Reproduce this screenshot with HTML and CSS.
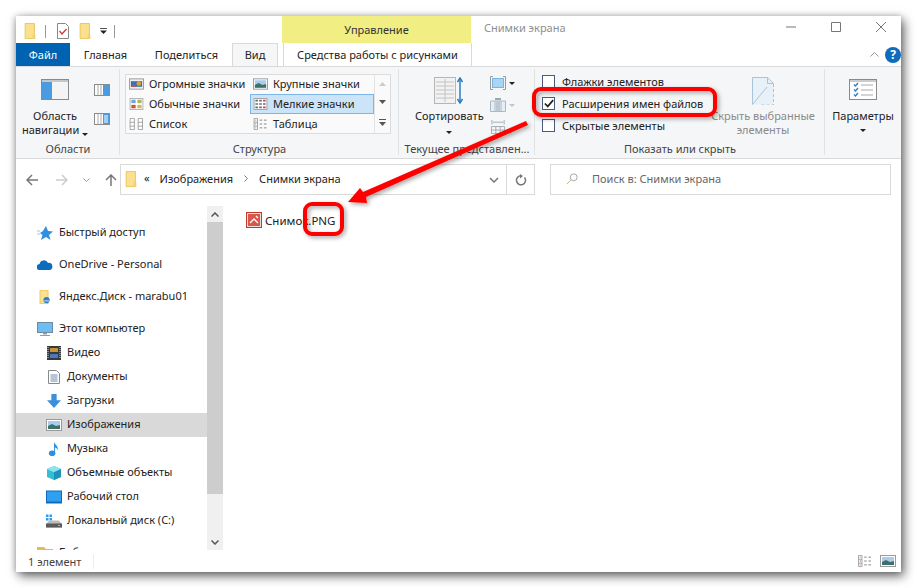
FILE: index.html
```html
<!DOCTYPE html>
<html lang="ru">
<head>
	<meta charset="UTF-8" />
	<title>Снимки экрана</title>
	<link rel="stylesheet" href="styles.css">
</head>
<body>
	<svg class="defs" width="0" height="0">
		<symbol id="folder" viewBox="0 0 12 18">
			<path d="M.5.5h10.500v17H.5z" fill="#fbe08e" stroke="#e8c35a"/>
			<path d="M9 13h3v5H9z" fill="#f3cf6e"/>
		</symbol>
		<symbol id="picture" viewBox="0 0 16 12">
			<rect x=".5" y=".5" width="15" height="11" fill="#fff" stroke="#9a9a9a"/>
			<rect x="2" y="2" width="12" height="8" fill="#a9cdea"/>
			<path d="M2 7l4-2 4 2 4-1v4H2z" fill="#3f6f6a"/>
		</symbol>
		<symbol id="dots" viewBox="0 0 16 14">
			<path d="M.5.5h4v13h-4zM.5 5h4M.5 9.500h4" fill="#fff" stroke="#999"/>
			<path d="M7 2.500h3M12 2.500h3M7 7h3M12 7h3M7 11.500h3M12 11.500h3" stroke="#777"/>
			<path d="M2 2h1v1H2zM2 6.500h1v1H2z" fill="#555"/>
			<path d="M2 11h1v1H2z" fill="#c33"/>
		</symbol>
	</svg>

	<div class="window">
		<div class="titlebar">
			<div class="quick">
				<svg class="i-folder"><use href="#folder"/></svg>
				<span class="qsep"></span>
				<svg class="i-check" viewBox="0 0 12 16"><path d="M.5.5h8l3 3v12H.5z" fill="#fff" stroke="#888"/><path d="M2.500 8l2.500 3 4.500-5" fill="none" stroke="#d33" stroke-width="1.300"/></svg>
				<svg class="i-folder"><use href="#folder"/></svg>
				<svg class="i-more" viewBox="0 0 8 7"><path d="M0 .5h8" stroke="#222"/><path d="M0 3h8L4 7z" fill="#222"/></svg>
				<span class="qsep"></span>
			</div>
			<div class="manage">Управление</div>
			<div class="title">Снимки экрана</div>
			<div class="controls">
				<svg viewBox="0 0 10 10"><path d="M0 5h10" stroke="#777"/></svg>
				<svg viewBox="0 0 10 10"><path d="M.5.500h9v9h-9z" fill="none" stroke="#777"/></svg>
				<svg viewBox="0 0 10 10"><path d="M0 0l10 10M10 0L0 10" stroke="#777"/></svg>
			</div>
		</div>

		<div class="tabs">
			<div class="tab tab-file">Файл</div>
			<div class="tab tab-home">Главная</div>
			<div class="tab tab-share">Поделиться</div>
			<div class="tab tab-view">Вид</div>
			<div class="tab tab-tools">Средства работы с рисунками</div>
			<div class="tabs-right">
				<svg class="i-up" viewBox="0 0 9 5"><path d="M.5 4.500l4-4 4 4" fill="none" stroke="#999"/></svg>
				<span class="help">?</span>
			</div>
		</div>

		<div class="ribbon">
			<div class="group g-panes">
				<div class="group-body panes">
					<div class="big">
						<svg class="i-nav" viewBox="0 0 28 21"><rect x=".5" y=".5" width="27" height="20" fill="#f4f4f4" stroke="#8a8a8a"/><rect x="1" y="3" width="10" height="17" fill="#4a9be0"/><path d="M1 2h26" stroke="#999"/></svg>
						<span>Область<br>навигации <i class="caret"></i></span>
					</div>
					<div class="panes-side">
						<svg viewBox="0 0 16 12"><rect x=".5" y=".5" width="15" height="11" fill="#fff" stroke="#8a8a8a"/><rect x="9" y="1" width="6" height="10" fill="#4a9be0"/><path d="M4 1v10M7 1v10" stroke="#aaa"/></svg>
						<svg viewBox="0 0 16 12"><rect x=".5" y=".5" width="15" height="11" fill="#fff" stroke="#8a8a8a"/><rect x="9" y="1" width="6" height="10" fill="#4a9be0"/><path d="M10 3h4M10 5h4M10 7h4M10 9h4" stroke="#fff"/><path d="M4 1v10M7 1v10" stroke="#aaa"/></svg>
					</div>
				</div>
				<div class="group-label">Области</div>
			</div>

			<div class="group g-layout">
				<div class="group-body">
					<div class="gallery">
						<div class="gallery-items">
							<div class="gitem"><svg viewBox="0 0 16 12"><rect x=".5" y=".5" width="15" height="11" fill="#eee" stroke="#999"/><rect x="2" y="3" width="12" height="6" fill="#3a6fb0"/><path d="M2 9l3-3 3 3z" fill="#c8503a"/><circle cx="10.500" cy="5.500" r="2.500" fill="#e0a030"/></svg>Огромные значки</div>
							<div class="gitem"><svg><use href="#picture"/></svg>Крупные значки</div>
							<div class="gitem"><svg viewBox="0 0 16 14"><rect x=".5" y=".5" width="15" height="13" fill="#fff" stroke="#aaa"/><path d="M2 2h5v4H2z" fill="#6fa8d8"/><path d="M9 2h5v4H9z" fill="#a8b860"/><path d="M2 8h5v4H2z" fill="#d0503a"/><path d="M9 8h5v4H9z" fill="#d8b850"/></svg>Обычные значки</div>
							<div class="gitem gitem-on"><svg viewBox="0 0 16 14"><rect x=".5" y=".5" width="15" height="13" fill="#fff" stroke="#999"/><path d="M2 2h3v2H2zM6.500 2h3v2h-3zM2 6h3v2H2zM6.500 6h3v2h-3zM11 6h3v2h-3zM2 10h3v2H2zM6.500 10h3v2h-3z" fill="#6a6a6a"/><path d="M11 2h3v2h-3zM11 10h3v2h-3z" fill="#b44"/></svg>Мелкие значки</div>
							<div class="gitem"><svg viewBox="0 0 16 14"><path d="M.5.5h5v13h-5zM.5 5h5M.5 9.500h5M10 .5h5v13h-5zM10 5h5M10 9.500h5" fill="#fff" stroke="#999"/></svg>Список</div>
							<div class="gitem"><svg><use href="#dots"/></svg>Таблица</div>
						</div>
						<div class="gallery-scroll">
							<svg viewBox="0 0 7 4"><path d="M0 4l3.500-4L7 4z" fill="#ccc"/></svg>
							<svg viewBox="0 0 7 4"><path d="M0 0l3.500 4L7 0z" fill="#555"/></svg>
							<svg class="down-more" viewBox="0 0 7 7"><path d="M0 .5h7" stroke="#555"/><path d="M0 3l3.500 4L7 3z" fill="#555"/></svg>
						</div>
					</div>
				</div>
				<div class="group-label">Структура</div>
			</div>

			<div class="group g-current">
				<div class="group-body current">
					<div class="big big-sort">
						<svg class="i-sort" viewBox="0 0 30 27"><rect x=".5" y=".5" width="21" height="26" fill="#f2f2f2" stroke="#b5b5b5"/><path d="M2 5h18M2 9h18M2 13h18M2 17h18M2 21h18M11 2v23" stroke="#c2c2c2"/><path d="M26 2v23" stroke="#2c7cc4" stroke-width="1.500"/><path d="M23.500 5L26 1l2.500 4M23.500 22l2.500 4 2.500-4" fill="none" stroke="#2c7cc4" stroke-width="1.500"/></svg>
						<span>Сортировать</span>
						<i class="caret"></i>
					</div>
					<div class="current-side">
						<div class="side-row"><svg viewBox="0 0 16 14"><path d="M3 .5H.5v13H3M13 .5h2.500v13H13" fill="none" stroke="#999"/><rect x="2.500" y="2.500" width="11" height="9" fill="#a9d5f5" stroke="#7ab5e2"/></svg><i class="caret"></i></div>
						<div class="side-row side-off"><svg viewBox="0 0 16 14"><path d="M.5 3h15v10.500H.5z" fill="#e6eef5" stroke="#aab8c4"/><path d="M5 3v11M11 3v11" stroke="#aab8c4"/><path d="M6 3h4v10H6z" fill="#bcc8d2"/><path d="M5 0h6v2H5z" fill="#9aa"/></svg><i class="caret caret-off"></i></div>
						<div class="side-row side-off"><svg viewBox="0 0 16 16"><path d="M1 0v5M15 0v5M2 2.500h12" fill="none" stroke="#9aa4ad"/><path d="M.5 7.500h15v8H.5zM.5 11.500h15M5.500 7.500v8M10.500 7.500v8" fill="none" stroke="#9aa4ad"/></svg></div>
					</div>
				</div>
				<div class="group-label">Текущее представлен...</div>
			</div>

			<div class="group g-show">
				<div class="group-body show">
					<div class="checks">
						<label class="check"><span class="box"></span>Флажки элементов</label>
						<label class="check"><span class="box"><svg viewBox="0 0 12 10"><path d="M1 5l3.500 3.500L11 1" fill="none" stroke="#222" stroke-width="2"/></svg></span>Расширения имен файлов</label>
						<label class="check"><span class="box"></span>Скрытые элементы</label>
					</div>
					<div class="big big-hide">
						<svg class="i-hide" viewBox="0 0 22 28"><path d="M.5.5h15l6 6v21H.5z" fill="#e8f0f8"/><path d="M21.500 7v21H8" fill="none" stroke="#a9c3dc" stroke-dasharray="3 2"/><path d="M.5 27.500V.5h15l6 6h-6V.5M.5 27.500L15 10" fill="none" stroke="#a9c3dc"/></svg>
						<span>Скрыть выбранные<br>элементы</span>
					</div>
				</div>
				<div class="group-label">Показать или скрыть</div>
			</div>

			<div class="group g-options">
				<div class="group-body">
					<div class="big">
						<svg class="i-nav" viewBox="0 0 28 21"><rect x=".5" y=".5" width="27" height="20" fill="#fff" stroke="#8a8a8a"/><path d="M1 2h26" stroke="#999"/><path d="M5 5.500l1.500 1.500 2.500-3M5 10.500l1.500 1.500 2.500-3M5 15.500l1.500 1.500 2.500-3" fill="none" stroke="#2c7cc4" stroke-width="1.300"/><path d="M12 6h12M12 11h12M12 16h12" stroke="#aaa"/></svg>
						<span>Параметры</span>
						<i class="caret"></i>
					</div>
				</div>
			</div>
		</div>

		<div class="addressbar">
			<div class="navbtns">
				<svg class="nb-back" viewBox="0 0 12 12"><path d="M12 6H1.500M6 1L1 6l5 5" fill="none" stroke="#777" stroke-width="1.500"/></svg>
				<svg class="nb-fwd" viewBox="0 0 12 12"><path d="M0 6h10.500M6 1l5 5-5 5" fill="none" stroke="#ccc" stroke-width="1.500"/></svg>
				<svg class="nb-down" viewBox="0 0 7 4"><path d="M.5.5l3 3 3-3" fill="none" stroke="#999"/></svg>
				<svg class="nb-up" viewBox="0 0 12 12"><path d="M6 12V1.500M1 6l5-5 5 5" fill="none" stroke="#777" stroke-width="1.500"/></svg>
			</div>
			<div class="path">
				<svg class="i-folder"><use href="#folder"/></svg>
				<span class="crumb-more">«</span>
				<span>Изображения</span>
				<svg class="crumb-sep" viewBox="0 0 4 7"><path d="M.5.500l3 3-3 3" fill="none" stroke="#777"/></svg>
				<span>Снимки экрана</span>
				<svg class="path-down" viewBox="0 0 10 6"><path d="M1 1l4 4 4-4" fill="none" stroke="#777" stroke-width="1.500"/></svg>
				<span class="refresh"><svg viewBox="0 0 12 12"><path d="M9.500 3.500a4.500 4.500 0 1 1-3.500-1.700" fill="none" stroke="#777" stroke-width="1.500"/><path d="M5 0l3 2-3 2.500z" fill="#777"/></svg></span>
			</div>
			<div class="search">
				<svg viewBox="0 0 14 14"><circle cx="9" cy="5" r="4" fill="none" stroke="#999"/><path d="M6 8l-5 5" stroke="#b9a77a"/></svg>
				Поиск в: Снимки экрана
			</div>
		</div>

		<div class="content">
			<div class="navpane">
				<ul class="tree">
					<li class="node"><svg viewBox="0 0 16 14"><path d="M9 0l2 5 5 .5-4 3.500 1.500 5L9 11l-5 3 1.500-5L3 7 6 5z" fill="#2f8fe0"/><path d="M0 5h3M0 8h3" stroke="#9cc8ee"/></svg>Быстрый доступ</li>
					<li class="node"><svg viewBox="0 0 16 10"><path d="M3 10a3 3 0 0 1-.5-6A4.500 4.500 0 0 1 11 3a3.500 3.500 0 0 1 1.500 7z" fill="#0f6cbd"/></svg>OneDrive - Personal</li>
					<li class="node"><svg class="node-ya" viewBox="0 0 14 18"><path d="M.5.5h10.500v17H.5z" fill="#fbe08e" stroke="#e8c35a"/><circle cx="9" cy="13" r="4" fill="#2a7fd0"/><path d="M6 14h6" stroke="#fff"/></svg>Яндекс.Диск - marabu01</li>
					<li class="node node-pc"><svg viewBox="0 0 16 14"><rect x=".5" y=".5" width="15" height="10" fill="#6bbdf2" stroke="#6d8aa0"/><path d="M6 11h4v1.500H6zM3 13h10v1H3z" fill="#8aa0b0"/></svg>Этот компьютер</li>
					<li class="sub"><svg viewBox="0 0 14 14"><rect width="14" height="14" fill="#33393f"/><rect x="3" y="2" width="8" height="4" fill="#c9923a"/><rect x="3" y="8" width="8" height="4" fill="#4a78b8"/><path d="M1 1v12M13 1v12" stroke="#ddd" stroke-dasharray="1 1"/></svg>Видео</li>
					<li class="sub"><svg viewBox="0 0 12 14"><path d="M.5.5h8l3 3v10H.5z" fill="#fff" stroke="#888"/><path d="M2.500 5h7M2.500 7h7M2.500 9h7M2.500 11h7" stroke="#6a8cb0"/></svg>Документы</li>
					<li class="sub"><svg viewBox="0 0 16 16"><path d="M5 0h6v7h5l-8 9-8-9h5z" fill="#3b8fdc"/></svg>Загрузки</li>
					<li class="sub sub-on"><svg><use href="#picture"/></svg>Изображения</li>
					<li class="sub"><svg viewBox="0 0 12 15"><ellipse cx="4" cy="12" rx="3.500" ry="3" fill="#2f8fe0"/><path d="M6 12V0c1 3 5 4 4 9-.5-2-2-3-3-3v6z" fill="#2f8fe0"/></svg>Музыка</li>
					<li class="sub"><svg viewBox="0 0 16 16"><path d="M8 0l8 3.500v9L8 16l-8-3.500v-9z" fill="#36bcd4"/><path d="M8 0l8 3.500L8 7 0 3.500z" fill="#8fe3ee"/><path d="M8 7l8-3.500v9L8 16z" fill="#1c93b8"/></svg>Объемные объекты</li>
					<li class="sub"><svg viewBox="0 0 16 13"><rect width="16" height="13" fill="#0f6cbd"/><rect x="1" y="1" width="14" height="10" fill="#2fa0f0"/></svg>Рабочий стол</li>
					<li class="sub sub-last"><svg viewBox="0 0 16 13"><path d="M0 0h2.500v2.500H0zM3.500 0H6v2.500H3.500zM0 3.500h2.500V6H0zM3.500 3.500H6V6H3.500z" fill="#2f9bf0"/><path d="M3 6h10l3 4v3H0v-3z" fill="#bbb"/><rect y="9" width="16" height="4" fill="#5a5a5a"/><rect x="12" y="10.500" width="2" height="1" fill="#5f5"/></svg>Локальный диск (C:)</li>
					<li class="node"><svg viewBox="0 0 16 12"><path d="M0 0h7l2 2h7v10H0z" fill="#e9b957"/></svg>Библиотеки</li>
				</ul>
				<div class="scrollbar">
					<div class="sb-btn"><svg viewBox="0 0 8 5"><path d="M.5 4.500L4 1l3.500 3.500" fill="none" stroke="#555" stroke-width="1.500"/></svg></div>
					<div class="sb-thumb"></div>
					<div class="sb-track"></div>
					<div class="sb-btn"><svg viewBox="0 0 8 5"><path d="M.5.5L4 4 7.500.5" fill="none" stroke="#555" stroke-width="1.500"/></svg></div>
				</div>
			</div>
			<div class="files">
				<div class="file">
					<svg viewBox="0 0 16 16"><rect x=".5" y=".5" width="15" height="15" fill="#e8e2de" stroke="#c0392b"/><rect x="2" y="2" width="12" height="12" fill="#d8574a"/><path d="M4 11l4-4 4 4M10 4l2 2" fill="none" stroke="#fff" stroke-width="1.300"/></svg>
					Снимок.PNG
				</div>
			</div>
		</div>

		<div class="statusbar">
			<span class="count">1 элемент</span>
			<div class="views">
				<svg><use href="#dots"/></svg>
				<svg class="view-big"><use href="#picture"/></svg>
			</div>
		</div>
	</div>

	<svg class="marks" viewBox="0 0 917 588">
		<defs>
			<filter id="shade" x="-20%" y="-20%" width="140%" height="140%">
				<feDropShadow dx="2" dy="2" stdDeviation="2" flood-color="#000" flood-opacity=".35"/>
			</filter>
		</defs>
		<g filter="url(#shade)">
			<rect x="534" y="89" width="181" height="26" rx="7" fill="none" stroke="#f00" stroke-width="4"/>
			<rect x="305" y="204" width="37" height="30" rx="7" fill="none" stroke="#f00" stroke-width="4"/>
			<path d="M526 121l2 4-162 72 1 6-19-1 12-14 3 4z" fill="#f00"/>
		</g>
	</svg>
</body>
</html>
```

FILE: styles.css
```css
* {
	box-sizing: border-box;
}
html, body {
	height: 100%;
}
body {
	margin: 0;
	padding: 16px;
	background-color: white;
	font-family: "Noto Sans", Arial, sans-serif;
	font-size: 11px;
	color: #222;
	overflow: hidden;
}
svg {
	display: block;
	flex: none;
}
.defs {
	position: absolute;
}
.caret {
	display: inline-block;
	border: 3px solid transparent;
	border-top: 3px solid #222;
	border-bottom: 0;
	vertical-align: middle;
}
.caret-off {
	border-top-color: #c5c5c5;
}

.window {
	display: flex;
	flex-direction: column;
	width: 885px;
	height: 556px;
	background-color: white;
	box-shadow: 3px 4px 10px rgba(0, 0, 0, 0.6), -1px 0 6px rgba(0, 0, 0, 0.2);
}

/* title bar */
.titlebar {
	display: flex;
	height: 27px;
	flex: none;
}
.quick {
	display: flex;
	align-items: center;
	width: 266px;
	padding: 3px 0 0 8px;
}
.i-folder {
	width: 12px;
	height: 16px;
}
.qsep {
	width: 1px;
	height: 13px;
	background-color: #999;
	margin: 0 11px 0 9px;
}
.i-check {
	width: 12px;
	height: 16px;
	margin-right: 10px;
}
.i-more {
	width: 7px;
	height: 6px;
	margin-left: 9px;
	margin-right: -2px;
}
.manage {
	width: 189px;
	background-color: #f1ee84;
	text-align: center;
	padding-top: 6px;
	color: #333;
}
.title {
	flex: 1;
	padding: 4px 0 0 13px;
	color: #8f8f8f;
}
.controls {
	display: flex;
	gap: 35px;
	padding: 6px 15px 0 0;
}
.controls svg {
	width: 10px;
	height: 10px;
}

/* tabs */
.tabs {
	display: flex;
	height: 23px;
	flex: none;
	align-items: stretch;
	line-height: 23px;
}
.tab {
	text-align: center;
}
.tab-file {
	width: 54px;
	background-color: #0063b1;
	color: white;
}
.tab-home {
	width: 71px;
}
.tab-share {
	width: 91px;
}
.tab-view {
	width: 46px;
	background-color: #f5f6f7;
	border: 1px solid #d9d9d9;
	border-bottom: 0;
	line-height: 22px;
}
.tab-tools {
	width: 189px;
	margin-left: 5px;
	border: 1px solid #d9d9d9;
	border-width: 0 1px;
}
.tabs-right {
	flex: 1;
	display: flex;
	align-items: center;
	justify-content: flex-end;
	gap: 6px;
}
.i-up {
	width: 9px;
	height: 5px;
}
.help {
	width: 16px;
	height: 16px;
	border-radius: 50%;
	background-color: #0f6cbd;
	color: white;
	font-weight: bold;
	font-size: 12px;
	line-height: 16px;
	text-align: center;
}

/* ribbon */
.ribbon {
	display: flex;
	height: 93px;
	flex: none;
	background-color: #f5f6f7;
	border-top: 1px solid #d9d9d9;
	border-bottom: 1px solid #d9d9d9;
}
.group {
	display: flex;
	flex-direction: column;
	padding-top: 2px;
	position: relative;
}
.group::after {
	content: "";
	position: absolute;
	right: 0;
	top: 2px;
	bottom: 3px;
	width: 1px;
	background-color: #e1e2e3;
}
.group-body {
	flex: 1;
	display: flex;
}
.group-label {
	height: 20px;
	text-align: center;
	color: #444;
	line-height: 21px;
}
.g-panes {
	width: 104px;
}
.g-layout {
	width: 279px;
}
.g-current {
	width: 136px;
}
.g-show {
	width: 290px;
}
.g-options {
	flex: 1;
}
.g-options::after {
	display: none;
}
.big {
	display: flex;
	flex-direction: column;
	align-items: center;
	text-align: center;
	line-height: 14px;
	padding-top: 10px;
}
.big span {
	margin-top: 9px;
}
.big .caret {
	margin-top: 6px;
}
.i-nav {
	width: 28px;
	height: 21px;
}
.panes {
	padding-left: 6px;
	gap: 6px;
}
.panes-side {
	display: flex;
	flex-direction: column;
	gap: 17px;
	padding-top: 15px;
}
.panes-side svg {
	width: 16px;
	height: 12px;
}
.g-options .big {
	width: 100%;
}

.gallery {
	display: flex;
	margin: 5px 0 0 5px;
	width: 266px;
	height: 60px;
	border: 1px solid #dcdcdc;
	background-color: #fafafa;
}
.gallery-items {
	flex: none;
	display: grid;
	grid-template-columns: 124px 124px;
	grid-auto-rows: 20px;
	margin-top: -1px;
}
.gitem {
	display: flex;
	align-items: center;
	gap: 5px;
	padding: 0 0 2px 3px;
	white-space: nowrap;
}
.gitem svg {
	width: 15px;
	height: 12px;
	margin-top: 2px;
}
.gitem-on {
	background-color: #cce4f7;
	border: 1px solid #7fb5e6;
	padding-left: 2px;
}
.gallery-scroll {
	flex: 1;
	display: flex;
	flex-direction: column;
	align-items: center;
	justify-content: space-around;
	border-left: 1px solid #e3e3e3;
}
.gallery-scroll svg {
	width: 7px;
	height: 4px;
}
.gallery-scroll .down-more {
	height: 7px;
}

.current {
	padding-left: 16px;
	gap: 6px;
}
.big-sort {
	padding-top: 8px;
}
.big-sort span {
	margin-top: 5px;
}
.big-sort .caret {
	margin-top: 8px;
}
.i-sort {
	width: 30px;
	height: 27px;
}
.current-side {
	display: flex;
	flex-direction: column;
	padding-top: 7px;
	gap: 8px;
}
.side-row {
	display: flex;
	align-items: center;
	gap: 3px;
}
.side-row svg {
	width: 16px;
	height: 14px;
}

.show {
	padding-left: 7px;
}
.checks {
	width: 202px;
	display: flex;
	flex-direction: column;
	padding-top: 5px;
	gap: 8px;
}
.check {
	display: flex;
	align-items: center;
	gap: 7px;
	height: 14px;
	white-space: nowrap;
}
.box {
	width: 13px;
	height: 13px;
	border: 1px solid #4a5a78;
	background-color: white;
	display: flex;
	align-items: center;
	justify-content: center;
}
.box svg {
	width: 10px;
	height: 9px;
}
.big-hide {
	color: #8a8a8a;
	width: 100px;
	padding-top: 8px;
	margin-left: -31px;
	flex: none;
	white-space: nowrap;
}
.big-hide span {
	margin-top: 4px;
}
.i-hide {
	width: 22px;
	height: 28px;
}

/* address row */
.addressbar {
	display: flex;
	height: 47px;
	flex: none;
	padding-top: 5px;
	padding-bottom: 11px;
	padding-right: 10px;
}
.navbtns {
	display: flex;
	align-items: center;
	width: 104px;
	padding-left: 10px;
}
.nb-back {
	width: 12px;
	height: 12px;
}
.nb-fwd {
	width: 12px;
	height: 12px;
	margin-left: 18px;
}
.nb-down {
	width: 7px;
	height: 4px;
	margin-left: 15px;
}
.nb-up {
	width: 12px;
	height: 12px;
	margin-left: 15px;
}
.path, .search {
	display: flex;
	align-items: center;
	border: 1px solid #d9d9d9;
	padding-bottom: 2px;
}
.path {
	width: 415px;
	padding-left: 4px;
}
.crumb-more {
	margin: 0 10px 2px 7px;
}
.crumb-sep {
	width: 4px;
	height: 7px;
	margin: 0 11px 0 11px;
}
.path-down {
	width: 10px;
	height: 6px;
	margin-left: auto;
	margin-top: 2px;
}
.refresh {
	width: 28px;
	height: calc(100% + 2px);
	margin: 0 0 -2px 7px;
	border-left: 1px solid #d9d9d9;
	display: flex;
	align-items: center;
	justify-content: center;
}
.refresh svg {
	width: 12px;
	height: 12px;
}
.search {
	flex: 1;
	margin-left: 15px;
	padding-left: 15px;
	gap: 14px;
	color: #666;
}
.search svg {
	width: 12px;
	height: 12px;
}

/* content */
.content {
	flex: 1;
	display: flex;
	min-height: 0;
}
.navpane {
	display: flex;
	width: 207px;
	overflow: hidden;
}
.tree {
	list-style: none;
	margin: 0;
	padding: 15px 0 0;
	width: 191px;
}
.tree li {
	display: flex;
	align-items: center;
	height: 24px;
	padding-bottom: 3px;
	white-space: nowrap;
}
.tree svg {
	width: 16px;
	height: 14px;
	margin-top: 2px;
}
.node {
	padding-left: 21px;
	gap: 6px;
	margin-bottom: 8px;
}
.node-pc {
	margin-bottom: 0;
}
.sub {
	padding-left: 30px;
	gap: 5px;
}
.sub-last {
	margin-bottom: 8px;
}
.sub-on {
	background-color: #d9d9d9;
}
.scrollbar {
	width: 16px;
	display: flex;
	flex-direction: column;
	background-color: #f0f0f0;
}
.sb-btn {
	height: 16px;
	display: flex;
	align-items: center;
	justify-content: center;
}
.sb-btn svg {
	width: 8px;
	height: 5px;
}
.sb-thumb {
	height: 272px;
	background-color: #cdcdcd;
}
.sb-track {
	flex: 1;
}
.files {
	flex: 1;
	padding: 6px 0 0 23px;
}
.file {
	display: flex;
	align-items: center;
	gap: 3px;
	height: 18px;
	font-size: 11.5px;
	padding-bottom: 2px;
}
.file svg {
	width: 16px;
	height: 16px;
}

/* status bar */
.statusbar {
	display: flex;
	height: 22px;
	flex: none;
	align-items: center;
	padding: 0 5px 0 12px;
	color: #444;
}
.count {
	width: 66px;
	border-right: 1px solid #eee;
}
.views {
	margin-left: auto;
	display: flex;
	align-items: center;
	gap: 7px;
}
.views svg {
	width: 16px;
	height: 12px;
}

/* red marks drawn over the screenshot */
.marks {
	position: absolute;
	left: 0;
	top: 0;
	width: 917px;
	height: 588px;
	pointer-events: none;
}
```
